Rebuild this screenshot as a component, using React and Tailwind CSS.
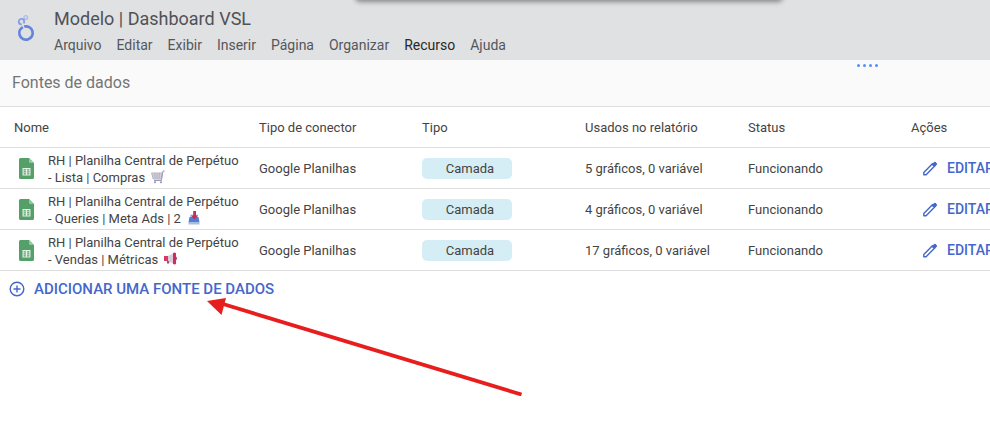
const MENU = ['Arquivo', 'Editar', 'Exibir', 'Inserir', 'Página', 'Organizar', 'Recurso', 'Ajuda'];

const COLUMNS = ['Nome', 'Tipo de conector', 'Tipo', 'Usados no relatório', 'Status', 'Ações'];

const SOURCES = [
  { line1: 'RH | Planilha Central de Perpétuo', line2: '- Lista | Compras', icon: CartIcon, used: '5 gráficos, 0 variável' },
  { line1: 'RH | Planilha Central de Perpétuo', line2: '- Queries | Meta Ads | 2', icon: InboxIcon, used: '4 gráficos, 0 variável' },
  { line1: 'RH | Planilha Central de Perpétuo', line2: '- Vendas | Métricas', icon: MegaphoneIcon, used: '17 gráficos, 0 variável' },
];

function Logo() {
  return (
    <svg viewBox="0 0 18 28" className="h-7 w-[18px] shrink-0" fill="none" aria-hidden="true">
      <circle cx="8.800" cy="3.400" r="1.800" stroke="#a9bdec" strokeWidth="1.400" />
      <circle cx="4.500" cy="7.600" r="2.700" stroke="#86a0e6" strokeWidth="1.900" strokeDasharray="14.600 2.400" transform="rotate(85 4.500 7.600)" />
      <circle cx="9" cy="19" r="6.700" stroke="#6684dc" strokeWidth="2.700" strokeDasharray="40.400 1.700" transform="rotate(-106 9 19)" />
    </svg>
  );
}

function SheetIcon() {
  return (
    <svg viewBox="0 0 15 21" className="h-[21px] w-[15px] shrink-0" aria-hidden="true">
      <path d="M1.500 0H10l5 5v14.500a1.500 1.500 0 0 1-1.500 1.500h-12A1.500 1.500 0 0 1 0 19.500V1.500A1.500 1.500 0 0 1 1.500 0Z" fill="#55a069" />
      <path d="M10 0l5 5h-3.700A1.300 1.300 0 0 1 10 3.700Z" fill="#94c7a2" />
      <path d="M3.500 10h8v7.500h-8Z" fill="#e4f2e7" />
      <path d="M4.600 11.200h2.300v1.300H4.600ZM8.100 11.200h2.300v1.300H8.100ZM4.600 13.300h2.300v1.200H4.600ZM8.100 13.300h2.300v1.200H8.100ZM4.600 15.300h2.300v1.200H4.600ZM8.100 15.300h2.300v1.200H8.100Z" fill="#55a069" />
    </svg>
  );
}

function CartIcon() {
  return (
    <svg viewBox="0 0 14 14" className="size-3.5" fill="none" role="img" aria-label="Carrinho">
      <path d="M.6 3h10.600l-1 6H2.200Z" fill="#e6e7ec" stroke="#a9acb8" strokeWidth=".9" />
      <path d="M3.500 3l.7 6M6 3v6M8.500 3l-.5 6M1.500 5h9M2 7h8" stroke="#a5a8b5" strokeWidth=".7" />
      <path d="M13.600 1h-1.600l-1.600 9.500H3" stroke="#9a97b8" strokeWidth="1" />
      <circle cx="4" cy="12.300" r="1" fill="#8d89b5" />
      <circle cx="10" cy="12.300" r="1" fill="#8d89b5" />
    </svg>
  );
}

function InboxIcon() {
  return (
    <svg viewBox="0 0 14 14" className="size-3.5" role="img" aria-label="Caixa de entrada">
      <path d="M3 3.500h8v3H3Z" fill="#b9c8ea" />
      <path d="M2.500 6h9l1 5.500h-11Z" fill="#4f7fd0" />
      <path d="M1.500 11.500h11v2h-11Z" fill="#a7bce4" />
      <path d="M6.200 0h2.800v4.500h2L7.400 8.500 4 4.500h2.200Z" fill="#bf3055" />
    </svg>
  );
}

function MegaphoneIcon() {
  return (
    <svg viewBox="0 0 14 14" className="size-3.5" role="img" aria-label="Megafone">
      <path d="M0 4h4v5H0Z" fill="#d63a66" />
      <path d="M4 4l6-3v11L4 9Z" fill="#dccbd8" />
      <path d="M9 1.200Q10.500-.2 12 1.200v3.300q2 1.800 0 3.700v3.600q-1.500 1.400-3 0Z" fill="#cb2f5d" />
      <path d="M3 9h2.200v2.500H3Z" fill="#9c5172" />
    </svg>
  );
}

function PencilIcon() {
  return (
    <svg viewBox="0 0 16 16" className="size-4 shrink-0" fill="none" aria-hidden="true">
      <path d="M1.800 13.700v-2.300L10.400 2.800l2.300 2.300-8.600 8.600Z" stroke="currentColor" strokeWidth="1.400" strokeLinejoin="round" />
      <path d="M10 3.500l1.700-1.700a1.600 1.600 0 0 1 2.300 2.300L12.300 5.800Z" fill="currentColor" stroke="currentColor" strokeWidth="1" strokeLinejoin="round" />
    </svg>
  );
}

function PlusCircleIcon() {
  return (
    <svg viewBox="0 0 16 16" className="size-4 shrink-0" fill="none" stroke="currentColor" strokeWidth="1.400" aria-hidden="true">
      <circle cx="8" cy="8" r="6.800" />
      <path d="M8 4.500v7M4.500 8h7" />
    </svg>
  );
}

function Header() {
  return (
    <header className="relative flex h-[60px] items-start overflow-hidden bg-[#e0e1e3] pl-[17px]">
      {/* Edge of the panel that hangs over the top of the window */}
      <div className="absolute -top-2 left-[36%] h-2 w-[43%] rounded shadow-[0_1px_5px_1px_rgba(0,0,0,0.4)]" />
      <div className="pt-[14px]">
        <Logo />
      </div>
      <div className="pt-2 pl-[19px]">
        <h1 className="text-[18px] leading-[22px] text-[#505255]">Modelo | Dashboard VSL</h1>
        <nav className="mt-1 flex gap-[15px] text-[14px] leading-[22px] text-[#55575a]">
          {MENU.map((item) => (
            <button key={item} type="button" className={item === 'Recurso' ? 'text-[#26282b]' : ''}>
              {item}
            </button>
          ))}
        </nav>
      </div>
    </header>
  );
}

function SourceRow({ source }) {
  const Icon = source.icon;
  return (
    <tr className="h-[41px] border-b border-[#dedede]">
      <td className="pt-0.5 pl-[19px]">
        <div className="flex items-center gap-3.5">
          <SheetIcon />
          <div className="leading-[17px] whitespace-nowrap">
            <div>{source.line1}</div>
            <div className="flex items-center gap-1.5">
              {source.line2}
              <Icon />
            </div>
          </div>
        </div>
      </td>
      <td className="pt-0.5 pl-3.5">Google Planilhas</td>
      <td className="pt-0.5 pl-3.5">
        <span className="block h-[21px] w-[90px] rounded-[5px] bg-[#d5eef5] pl-1.5 text-center leading-[21px]">Camada</span>
      </td>
      <td className="pt-0.5 pl-3.5">{source.used}</td>
      <td className="pt-0.5 pl-3.5">Funcionando</td>
      <td className="pt-0.5 pl-[25px]">
        <button type="button" className="flex items-center gap-[9px] text-[14px] font-medium text-[#4467cc]">
          <PencilIcon />
          EDITAR
        </button>
      </td>
    </tr>
  );
}

export default function App() {
  return (
    <div className="relative min-h-screen overflow-hidden bg-white font-['Roboto',sans-serif] text-[13px] text-[#444]">
      <Header />
      <main>
        <div className="relative flex h-[47px] items-center border-b border-[#dedede] bg-[#fafafa] pl-3">
          <h2 className="text-[16px] text-[#757575]">Fontes de dados</h2>
          <div className="absolute top-1 right-[112px] flex gap-[3px]">
            <i className="size-[3px] rounded-full bg-[#5b8def]" />
            <i className="size-[3px] rounded-full bg-[#5b8def]" />
            <i className="size-[3px] rounded-full bg-[#5b8def]" />
            <i className="size-[3px] rounded-full bg-[#5b8def]" />
          </div>
        </div>
        <table className="w-full min-w-[1060px] table-fixed border-collapse text-left">
          <colgroup>
            <col className="w-[245px]" />
            <col span={5} />
          </colgroup>
          <thead>
            <tr className="h-10 border-b border-[#dedede]">
              {COLUMNS.map((name) => (
                <th key={name} className="pt-0.5 pl-3.5 font-normal">{name}</th>
              ))}
            </tr>
          </thead>
          <tbody>
            {SOURCES.map((source) => (
              <SourceRow key={source.line2} source={source} />
            ))}
          </tbody>
        </table>
        <button type="button" className="mt-2 ml-[9px] flex items-center gap-[9px] text-[15px] leading-5 font-medium text-[#4467cc]">
          <PlusCircleIcon />
          ADICIONAR UMA FONTE DE DADOS
        </button>
      </main>
      <svg viewBox="0 0 318 98" className="absolute top-[298px] left-[206px] h-[98px] w-[318px]" aria-hidden="true">
        <path d="M17 6L315.500 96.500" stroke="#e81d1d" strokeWidth="3.800" />
        <path d="M1 3L20 0l-4.500 17Z" fill="#e81d1d" />
      </svg>
    </div>
  );
}
